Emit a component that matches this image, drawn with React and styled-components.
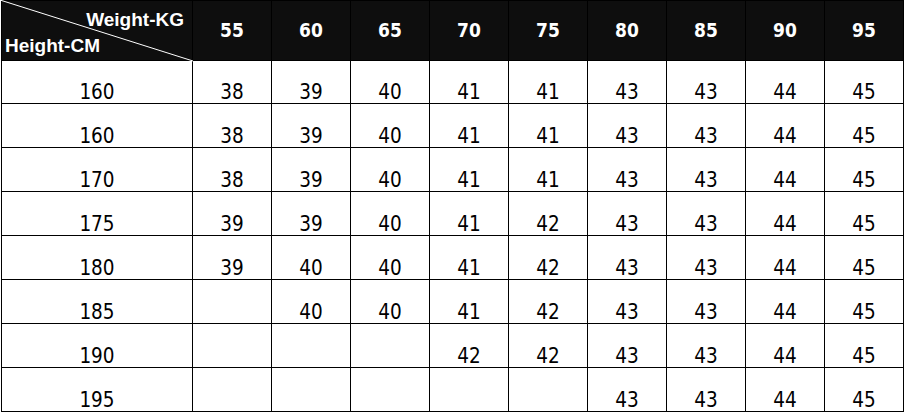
import React from "react";
import styled, { createGlobalStyle } from "styled-components";

const Global = createGlobalStyle`
  html, body { margin: 0; padding: 0; background: #fff; }
  body { width: 905px; height: 413px; overflow: hidden; }
`;

const Table = styled.div`
  display: grid;
  grid-template-columns: 190px repeat(9, 78px);
  grid-template-rows: 59px 42px repeat(7, 43px);
  gap: 1px;
  background: #000;
  border: 1px solid #000;
  margin-left: 1px;
  width: max-content;
`;

const HeadCell = styled.div`
  background: #0e0e0e;
  color: #fff;
  display: flex;
  align-items: center;
  justify-content: center;
  font-family: "DejaVu Sans Condensed", "DejaVu Sans", sans-serif;
  font-stretch: semi-condensed;
  font-weight: bold;
  font-size: 19px;
  line-height: 1;
`;

const Corner = styled.div`
  position: relative;
  background: #0e0e0e;
  color: #fff;
  font-family: "Liberation Sans", Arial, sans-serif;
  font-weight: bold;
  font-size: 19px;
  line-height: 19px;
  padding-top: 9px;
  box-sizing: border-box;
`;

const WeightLabel = styled.div`
  text-align: right;
  padding-right: 8px;
`;

const HeightLabel = styled.div`
  margin-top: 7px;
  padding-left: 3px;
`;

const Diagonal = styled.svg`
  position: absolute;
  left: 0;
  top: 0;
  width: 190px;
  height: 59px;
  overflow: visible;
  pointer-events: none;
`;

const Cell = styled.div`
  background: #fff;
  color: #000;
  display: flex;
  align-items: flex-end;
  justify-content: center;
  font-family: "DejaVu Sans Condensed", "DejaVu Sans", sans-serif;
  font-stretch: semi-condensed;
  font-size: 20.5px;
  line-height: 1;
  padding-bottom: ${(p) => (p.$first ? "1px" : "1px")};
  box-sizing: border-box;
`;

const weights = [55, 60, 65, 70, 75, 80, 85, 90, 95];

const rows = [
  [160, [38, 39, 40, 41, 41, 43, 43, 44, 45]],
  [160, [38, 39, 40, 41, 41, 43, 43, 44, 45]],
  [170, [38, 39, 40, 41, 41, 43, 43, 44, 45]],
  [175, [39, 39, 40, 41, 42, 43, 43, 44, 45]],
  [180, [39, 40, 40, 41, 42, 43, 43, 44, 45]],
  [185, [null, 40, 40, 41, 42, 43, 43, 44, 45]],
  [190, [null, null, null, 42, 42, 43, 43, 44, 45]],
  [195, [null, null, null, null, null, 43, 43, 44, 45]],
];

export default function App() {
  return (
    <>
      <Global />
      <Table>
        <Corner>
          <Diagonal viewBox="0 0 190 59">
            <line x1="-2" y1="-1" x2="191" y2="60" stroke="#fff" strokeWidth="1" />
          </Diagonal>
          <WeightLabel>Weight-KG</WeightLabel>
          <HeightLabel>Height-CM</HeightLabel>
        </Corner>
        {weights.map((w) => (
          <HeadCell key={w}>{w}</HeadCell>
        ))}
        {rows.map(([h, vals], i) => (
          <React.Fragment key={i}>
            <Cell>{h}</Cell>
            {vals.map((v, j) => (
              <Cell key={j}>{v ?? ""}</Cell>
            ))}
          </React.Fragment>
        ))}
      </Table>
    </>
  );
}
